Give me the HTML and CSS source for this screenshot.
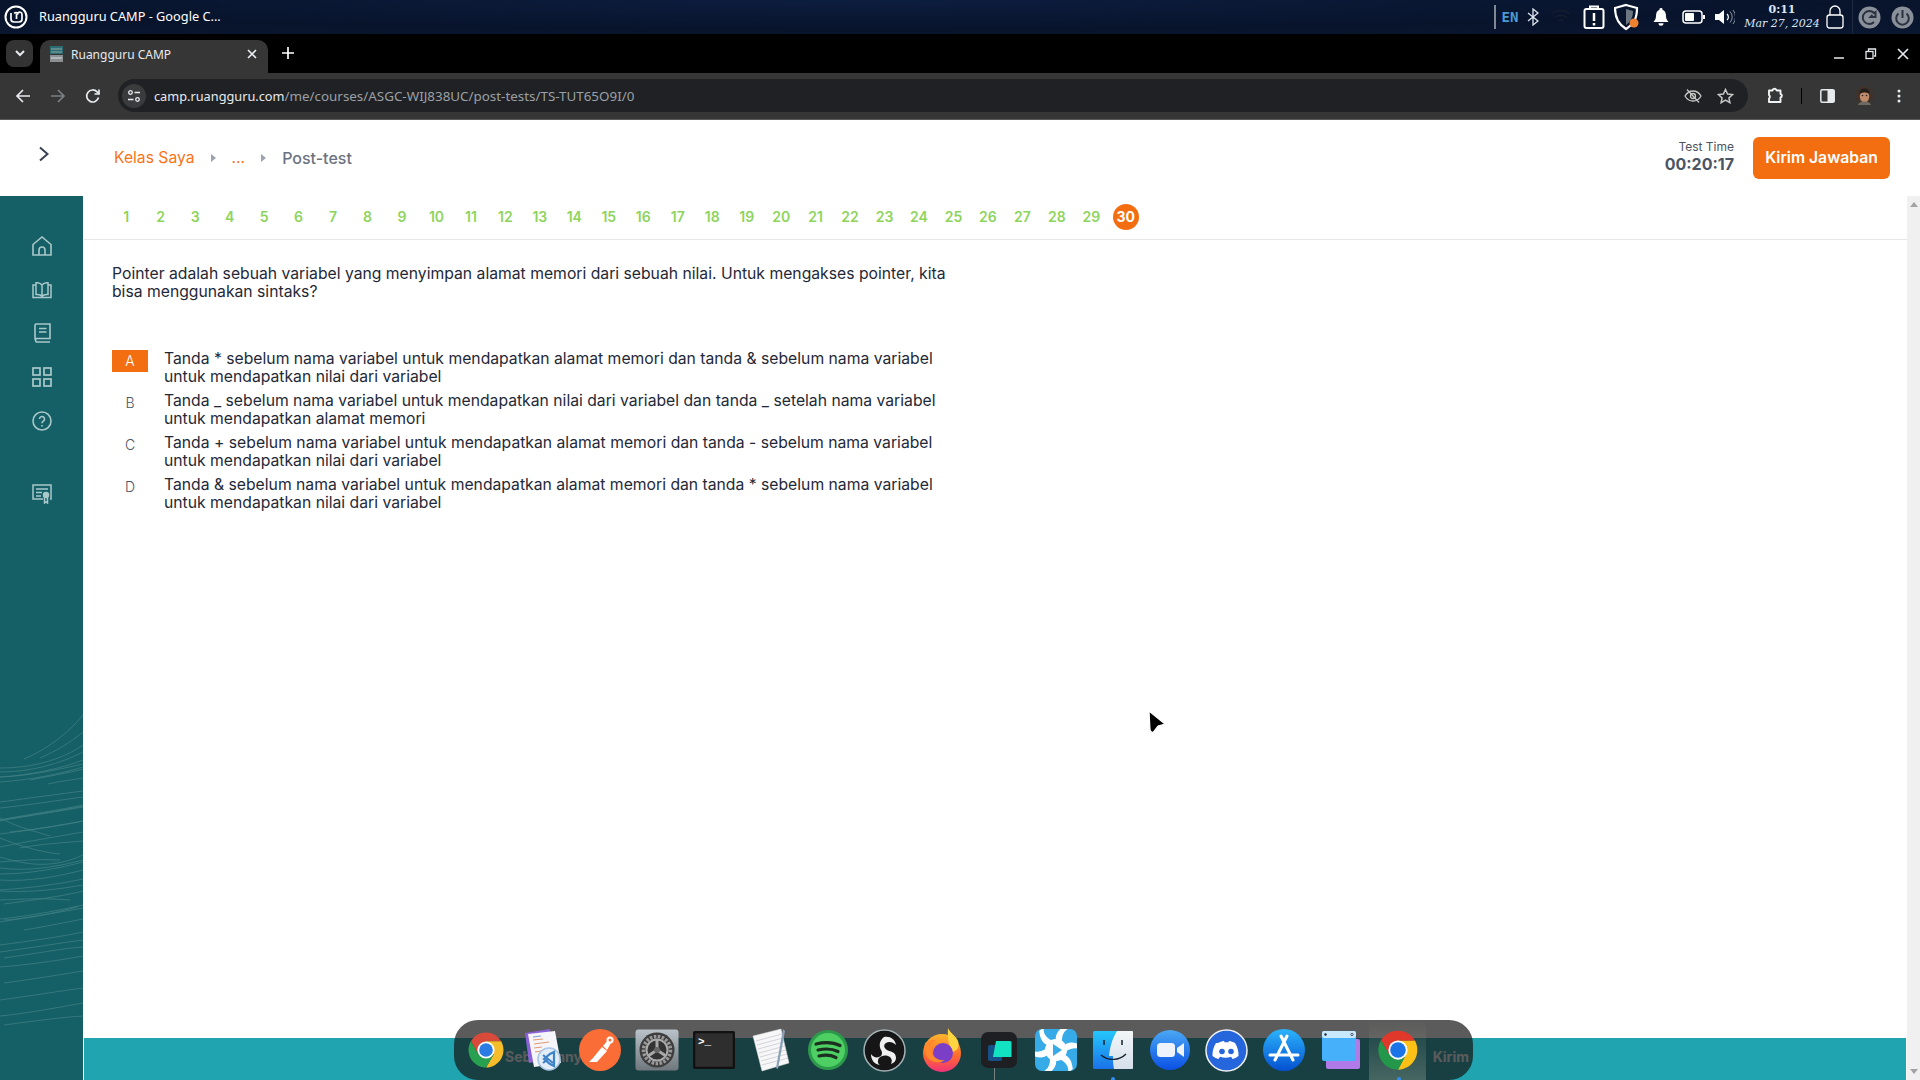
FILE: index.html
```html
<!DOCTYPE html>
<html lang="id">
<head>
<meta charset="utf-8">
<title>Ruangguru CAMP</title>
<link rel="stylesheet" href="styles.css">
</head>
<body>
<div class="screen">
  <div class="osbar">
    <div class="osleft">
      <svg class="mint" viewBox="0 0 24 24" fill="none" stroke="#fff" stroke-width="2"><circle cx="12" cy="12" r="10.500"/><path d="M7 8v6a3 3 0 0 0 3 3h5a3 3 0 0 0 3-3V9.500a2.200 2.200 0 0 0-4.200-1 2.200 2.200 0 0 0-3.600 0M12.500 9v5" stroke-width="1.700"/></svg>
      <span class="ostitle">Ruangguru CAMP - Google C...</span>
    </div>
    <div class="tray">
      <span class="cell w10"><i class="traysep"></i></span>
      <span class="cell w20 en">EN</span>
      <span class="cell w26"><svg width="12" height="18" viewBox="0 0 12 18" fill="none" stroke="#dfe5ee" stroke-width="1.300"><path d="M1 5l10 8-5 4V1l5 4L1 13"/></svg></span>
      <span class="cell w30"><svg width="20" height="16" viewBox="0 0 20 16" fill="none" stroke="#141e30" stroke-width="1.500"><path d="M1 5a13 13 0 0 1 18 0M4 8.500a9 9 0 0 1 12 0M7 12a4.500 4.500 0 0 1 6 0"/></svg></span>
      <span class="cell w36"><svg width="22" height="24" viewBox="0 0 22 24" fill="none" stroke="#fff" stroke-width="2"><rect x="1.500" y="4" width="19" height="19" rx="2"/><path d="M7 4V1.500h8V4"/><path d="M11 8v8M11 18v2.500" stroke-width="2.500"/></svg></span>
      <span class="cell w30"><svg width="26" height="28" viewBox="0 0 26 28"><path d="M12 2l11 3c0 9-2 15-11 21C4 21 1 14 1 5z" fill="none" stroke="#fff" stroke-width="2.200"/><path d="M12 6l7 2c0 6-2 10-7 14z" fill="#6d7783"/><circle cx="20" cy="20" r="4.500" fill="#ee8130"/></svg></span>
      <span class="cell w38"><svg width="16" height="18" viewBox="0 0 16 18" fill="#fff"><path d="M8 0a1.500 1.500 0 0 1 1.500 1.700C12 2.500 13 5 13 8c0 3 1.200 4.500 2.500 6H.5C1.800 12.500 3 11 3 8c0-3 1-5.500 3.500-6.300A1.500 1.500 0 0 1 8 0zM5.500 15.300h5a2.500 2.500 0 0 1-5 0z"/></svg></span>
      <span class="cell w28"><svg width="24" height="14" viewBox="0 0 24 14" fill="none" stroke="#fff" stroke-width="1.500"><rect x="1" y="1" width="19" height="12" rx="3"/><rect x="3" y="3" width="9" height="8" rx="1" fill="#fff" stroke="none"/><path d="M22 5v4" stroke-width="2"/></svg></span>
      <span class="cell w34"><svg width="20" height="16" viewBox="0 0 20 16" fill="none"><path d="M0 5h4l5-4v14l-5-4H0z" fill="#fff"/><path d="M12 5a4 4 0 0 1 0 6" stroke="#fff" stroke-width="1.200"/><path d="M15 2.500a8 8 0 0 1 0 11M18 1a11 11 0 0 1 0 14" stroke="#8994a4"/></svg></span>
      <span class="cell w80 clock"><b>0:11</b><em>Mar 27, 2024</em></span>
      <span class="cell w26"><svg width="18" height="24" viewBox="0 0 18 24" fill="none" stroke="#fff" stroke-width="1.300"><rect x="1" y="10" width="16" height="13" rx="2.500"/><path d="M4 10V6a5 5 0 0 1 10 0v4"/></svg></span>
      <span class="cell w8"><i class="traysep thin"></i></span>
      <span class="cell w26"><svg width="23" height="23" viewBox="0 0 23 23"><circle cx="11.500" cy="11.500" r="11" fill="#8a9099"/><path d="M16 16a6.500 6.500 0 1 1 0-9l1.500-1v5h-5l2-2" fill="none" stroke="#2a3240" stroke-width="2"/></svg></span>
      <span class="cell w26 shiftl"><svg width="23" height="23" viewBox="0 0 23 23"><circle cx="11.500" cy="11.500" r="11" fill="#8a9099"/><path d="M7.500 7.500a6.300 6.300 0 1 0 8 0M11.500 4v8" fill="none" stroke="#2a3240" stroke-width="2"/></svg></span>
    </div>
  </div>

  <div class="tabstrip">
    <span class="tabmenu"><svg width="10" height="7" viewBox="0 0 10 7" fill="none" stroke="#e8eaed" stroke-width="2"><path d="M1 1l4 4 4-4"/></svg></span>
    <div class="tab">
      <svg class="favicon" width="15" height="17" viewBox="0 0 15 17"><rect x="1" width="13" height="8" fill="#2c6c70"/><rect x="1" y="9" width="13" height="7" fill="#8a8f94"/><path d="M2 3h11M2 6h11" stroke="#8fa8a8"/><path d="M2 12h11" stroke="#ddd"/></svg>
      <span class="tabtitle">Ruangguru CAMP</span>
      <svg width="10" height="10" viewBox="0 0 10 10" stroke="#e8eaed" stroke-width="1.700"><path d="M1 1l8 8M9 1l-8 8"/></svg>
    </div>
    <svg class="newtab" width="12" height="12" viewBox="0 0 12 12" stroke="#fff" stroke-width="1.700"><path d="M6 0v12M0 6h12"/></svg>
    <div class="winctl">
      <span class="cell w32"><svg width="12" height="12" viewBox="0 0 12 12" stroke="#e8eaed" stroke-width="1.500"><path d="M1 10h10"/></svg></span>
      <span class="cell w32"><svg width="12" height="12" viewBox="0 0 12 12" fill="none" stroke="#e8eaed" stroke-width="1.300"><rect x="1" y="3.500" width="7" height="7"/><path d="M3.500 3V1h7v7H9"/></svg></span>
      <span class="cell w32"><svg width="12" height="12" viewBox="0 0 12 12" stroke="#e8eaed" stroke-width="1.600"><path d="M1 1l10 10M11 1L1 11"/></svg></span>
    </div>
  </div>

  <div class="toolbar">
    <span class="cell w35"><svg width="16" height="16" viewBox="0 0 16 16" fill="none" stroke="#e8eaed" stroke-width="1.700"><path d="M15 8H2M8 2L2 8l6 6"/></svg></span>
    <span class="cell w35"><svg width="16" height="16" viewBox="0 0 16 16" fill="none" stroke="#7c7f83" stroke-width="1.700"><path d="M1 8h13M8 2l6 6-6 6"/></svg></span>
    <span class="cell w35"><svg width="16" height="16" viewBox="0 0 16 16" fill="none" stroke="#e8eaed" stroke-width="1.700"><path d="M13.500 9.500a6 6 0 1 1-1.400-5.600L14 6"/><path d="M14 1.500V6H9.500"/></svg></span>
    <div class="omnibox">
      <span class="siteicon"><svg width="14" height="14" viewBox="0 0 14 14" fill="none" stroke="#e8eaed" stroke-width="1.300"><circle cx="3.500" cy="3.500" r="1.800"/><path d="M7.500 3.500H13M1 10.500h5.500"/><circle cx="10.500" cy="10.500" r="1.800"/></svg></span>
      <span class="url">camp.ruangguru.com<span class="urlpath">/me/courses/ASGC-WIJ838UC/post-tests/TS-TUT65O9I/0</span></span>
      <span class="cell w32"><svg width="18" height="16" viewBox="0 0 18 16" fill="none" stroke="#c4c7c5" stroke-width="1.300"><path d="M1 8c2-3.500 4.800-5 8-5s6 1.500 8 5c-2 3.500-4.800 5-8 5s-6-1.500-8-5z"/><circle cx="9" cy="8" r="2.500"/><path d="M3 1.500l12 13"/></svg></span>
      <span class="cell w32"><svg width="17" height="16" viewBox="0 0 17 16" fill="none" stroke="#c4c7c5" stroke-width="1.500"><path d="M8.500 1.500l2.100 4.500 4.900.6-3.600 3.300 1 4.800-4.400-2.500-4.400 2.500 1-4.800L1.500 6.600l4.900-.6z"/></svg></span>
    </div>
    <span class="cell w26"><svg width="18" height="17" viewBox="0 0 18 17" fill="none" stroke="#f2f3f4" stroke-width="1.900"><path d="M3 3.500h3.500a2 2 0 0 1 3.500-1l1 1h3.500V7a1.800 1.800 0 0 1 0 3.500V15H3v-3.500a2.200 2.200 0 0 0 0-3.500z" stroke-linejoin="round"/></svg></span>
    <span class="cell w26"><i class="tooldiv"></i></span>
    <span class="cell w26"><svg width="15" height="14" viewBox="0 0 15 14"><rect x=".8" y=".8" width="13.400" height="12.400" rx="1.500" fill="none" stroke="#e8eaed" stroke-width="1.500"/><rect x="7.500" y="1" width="7" height="12" fill="#e8eaed"/></svg></span>
    <span class="cell w48"><svg width="19" height="19" viewBox="0 0 19 19"><circle cx="9.500" cy="9.500" r="9.500" fill="#3c332c"/><ellipse cx="9.500" cy="10.500" rx="4.700" ry="6" fill="#c08a68"/><path d="M4.500 8c0-4 2-5.500 5-5.500s5 1.500 5 5.500c-3-2-7-2-10 0z" fill="#241d18"/><circle cx="7.500" cy="9.500" r=".8" fill="#222"/><circle cx="11.500" cy="9.500" r=".8" fill="#222"/><path d="M3 19c1-3 4-3.500 6.500-3.500S15 16 16 19z" fill="#6f6a60"/></svg></span>
    <span class="cell w22"><svg width="4" height="14" viewBox="0 0 4 14" fill="#e8eaed"><circle cx="2" cy="2" r="1.500"/><circle cx="2" cy="7" r="1.500"/><circle cx="2" cy="12" r="1.500"/></svg></span>
  </div>

  <header class="pagehead">
    <svg class="chev" width="12" height="16" viewBox="0 0 12 16" fill="none" stroke="#374151" stroke-width="2"><path d="M2 1.500L9.500 8 2 14.500"/></svg>
    <nav class="crumbs">
      <a>Kelas Saya</a><i class="tri"></i><a class="dots">...</a><i class="tri"></i><span class="cur">Post-test</span>
    </nav>
    <div class="timer"><span>Test Time</span><b>00:20:17</b></div>
    <button class="send">Kirim Jawaban</button>
  </header>

  <div class="body">
    <aside class="side">
      <svg class="sidelines" width="83" height="884" viewBox="0 0 83 884" fill="none" stroke="#4d8a8d" stroke-width=".8" opacity=".75">
        <path d="M24 563c24-10 44-26 59-44M40 562c16-7 30-15 43-26M0 572c30 0 60-7 83-23M0 576c30 0 60-8 83-20M0 581c30-2 60-8 83-17M0 586c30-2 60-8 83-15M0 581c30-1 60-8 83-13M30 584c20-4 38-7 53-11M48 588c12-3 24-4 35-6"/>
        <path d="M0 606c30-4 60-8 83-11M0 612c30-3 60-8 83-11M0 624c30-4 60-9 83-13M0 624c30-6 60-10 83-15M0 625c30-6 60-10 83-15M0 638c30-4 60-8 83-13M0 651c30-6 60-11 83-15M0 622c15 8 30 12 50 18M10 636c24-2 50-7 73-11"/>
        <path d="M0 642c20 8 40 14 60 16M20 652c20-4 40-5 63-7M0 661c24 7 50 13 83-2M0 666c20-2 40-3 60-2M0 672c30 4 60-2 83-8M0 678c30 0 60-6 83-12M0 684c30 2 60-4 83-10M0 694c30-2 60-6 83-11M0 695c30 2 60-2 83-6M0 704c24-1 46-2 70 0"/>
        <path d="M4 708c30-4 60-8 79-13M0 723c30-3 60-9 83-14M4 724c24-1 50-7 73-13M0 726c24-4 50-8 83-14M24 734c24-4 44-8 59-11M0 749c30-4 60-8 83-13M0 756c30-4 60-9 83-12M4 762c30-4 60-10 79-11M0 771c24-2 50-5 83-11M4 787c30-4 60-9 79-12M0 804c30-4 60-9 83-12M0 820c30-3 60-9 83-13M4 829c30-4 60-8 79-9"/>
      </svg>
      <nav class="sidenav">
        <svg viewBox="0 0 20 20" fill="none" stroke="#a9c8ca" stroke-width="1.600"><path d="M1 19V8.500L10 1l9 7.500V19zM7 19v-5a3 3 0 0 1 6 0v5"/></svg>
        <svg viewBox="0 0 20 20" fill="none" stroke="#a9c8ca" stroke-width="1.500"><path d="M10 5C8.500 3 6 2.500 4 2.800v11.700c2-.3 4.500 0 6 1.800 1.500-1.800 4-2.100 6-1.800V2.800C14 2.500 11.500 3 10 5zM10 5v11M4 5H1v12.500h18V5h-3"/></svg>
        <svg viewBox="0 0 20 20" fill="none" stroke="#a9c8ca" stroke-width="1.600"><path d="M3 16.500V2a1 1 0 0 1 1-1h14v14.500H4.500a2 2 0 0 0 0 3.500H18M7 5.500h7.500M7 9h7.500"/></svg>
        <svg viewBox="0 0 20 20" fill="none" stroke="#a9c8ca" stroke-width="1.700"><rect x="1" y="1" width="7" height="7"/><rect x="12" y="1" width="7" height="7"/><rect x="1" y="12" width="7" height="7"/><rect x="12" y="12" width="7" height="7"/></svg>
        <svg viewBox="0 0 20 20" fill="none" stroke="#a9c8ca" stroke-width="1.600"><circle cx="10" cy="10" r="9"/><path d="M7.500 8a2.500 2.500 0 1 1 3.800 2.100c-.9.600-1.300 1-1.300 2.200M10 14v1.600"/></svg>
        <svg class="cert" viewBox="0 0 20 20" fill="none" stroke="#a9c8ca" stroke-width="1.500"><path d="M11 15H1V1h18v14h-1M4 5h12M4 8.500h6M4 12h5"/><circle cx="14" cy="11" r="2.500" fill="#a9c8ca"/><path d="M12.500 13.500V19l1.500-1 1.500 1v-5.500"/></svg>
      </nav>
    </aside>

    <main class="main">
      <div class="numbers">
        <a>1</a><a>2</a><a>3</a><a>4</a><a>5</a><a>6</a><a>7</a><a>8</a><a>9</a><a>10</a><a>11</a><a>12</a><a>13</a><a>14</a><a>15</a><a>16</a><a>17</a><a>18</a><a>19</a><a>20</a><a>21</a><a>22</a><a>23</a><a>24</a><a>25</a><a>26</a><a>27</a><a>28</a><a>29</a><a class="active"><span>30</span></a>
      </div>
      <div class="content">
        <p class="question">Pointer adalah sebuah variabel yang menyimpan alamat memori dari sebuah nilai. Untuk mengakses pointer, kita bisa menggunakan sintaks?</p>
        <ul class="options">
          <li><span class="letter sel">A</span><span class="opt">Tanda * sebelum nama variabel untuk mendapatkan alamat memori dan tanda &amp; sebelum nama variabel untuk mendapatkan nilai dari variabel</span></li>
          <li><span class="letter">B</span><span class="opt">Tanda _ sebelum nama variabel untuk mendapatkan nilai dari variabel dan tanda _ setelah nama variabel untuk mendapatkan alamat memori</span></li>
          <li><span class="letter">C</span><span class="opt">Tanda + sebelum nama variabel untuk mendapatkan alamat memori dan tanda - sebelum nama variabel untuk mendapatkan nilai dari variabel</span></li>
          <li><span class="letter">D</span><span class="opt">Tanda &amp; sebelum nama variabel untuk mendapatkan alamat memori dan tanda * sebelum nama variabel untuk mendapatkan nilai dari variabel</span></li>
        </ul>
      </div>
      <div class="band"><span>Sebelumnya</span><span>Kirim</span></div>
    </main>

    <div class="scrollbar"><i class="up"></i><i class="down"></i></div>
  </div>

  <svg class="cursor" width="20" height="26" viewBox="0 0 20 26"><path d="M2 2l16 13-7 2-5 6.500q-3-.5-3-3z" fill="#000" stroke="#fff" stroke-width="1.200" stroke-linejoin="round"/></svg>

  <div class="dock">
    <span class="app"><svg width="42" height="42" viewBox="0 0 48 48"><path d="M24 14h17.300A20 20 0 0 0 6.700 14l8.600 15z" fill="#d94a3a"/><path d="M41.300 14A20 20 0 0 1 24 44l8.700-15L24 14z" fill="#f5bd2a"/><path d="M24 44A20 20 0 0 1 6.700 14l8.600 15h17.400z" fill="#27a04f"/><circle cx="24" cy="24" r="9.800" fill="#fff"/><circle cx="24" cy="24" r="7.800" fill="#2a7be4"/></svg></span>
    <span class="app"><svg width="42" height="46" viewBox="0 0 42 46"><path d="M3 6l25-4 3 30-24 4z" fill="#8a62d8"/><path d="M6 7l27-3 6 32-27 4z" fill="#f5f5fa"/><path d="M11 13l10-1M12 17l15-2M12 21l8-1M13 25l12-2" stroke="#e39a70" stroke-width="1"/><path d="M11 10l8-1" stroke="#7a9ad8" stroke-width="1"/><circle cx="27" cy="32" r="11" fill="#e3edf7" stroke="#a9c6e4" stroke-width="1.500"/><path d="M32 25v14l-4-2-6-5 6-5zM21 28l10 8M21 36l5-4" fill="none" stroke="#3d83c8" stroke-width="2.200"/></svg></span>
    <span class="app"><svg width="42" height="42" viewBox="0 0 42 42"><circle cx="21" cy="21" r="21" fill="#fb6d36"/><path d="M10 33l4-4 9-11 5 4-10 11z M10 33l13-1" fill="#fff"/><path d="M24 17l5-6 3 3-4 7z" fill="#fff"/><circle cx="31" cy="11" r="3.500" fill="#fff"/><circle cx="31" cy="11" r="1.500" fill="#fb6d36"/></svg></span>
    <span class="app"><svg width="44" height="42" viewBox="0 0 44 42"><defs><linearGradient id="sg" x1="0" y1="0" x2="0" y2="1"><stop offset="0" stop-color="#bac3c9"/><stop offset="1" stop-color="#6f777c"/></linearGradient></defs><rect width="43" height="41" x=".5" y=".5" rx="3" fill="url(#sg)"/><circle cx="22" cy="21" r="17.500" fill="#3d3d3d"/><circle cx="22" cy="21" r="13.500" fill="none" stroke="#9a9a9a" stroke-width="3.500" stroke-dasharray="2.500 1.500"/><circle cx="22" cy="21" r="10.500" fill="#333" stroke="#aaa" stroke-width="2"/><path d="M22 21V11M22 21l-9 6M22 21l9 6" stroke="#a8a8a8" stroke-width="3"/><circle cx="22" cy="21" r="3" fill="#666"/></svg></span>
    <span class="app"><svg width="42" height="38" viewBox="0 0 42 38"><rect x="1" y="1" width="40" height="36" rx="2" fill="#2e2e2e" stroke="#111" stroke-width="2.500"/><text x="5" y="14" fill="#fff" font-family="Liberation Mono, monospace" font-size="11" font-weight="700">&gt;_</text></svg></span>
    <span class="app"><svg width="38" height="44" viewBox="0 0 38 44"><path d="M1 8L29 1l8 34-27 8z" fill="#f7f7f7" stroke="#ddd" stroke-width=".5"/><path d="M4 13l26-7M5 17l26-7M6 21l26-7M7 25l26-7M8 29l26-7M9 33l26-7M10 37l26-7" stroke="#c9c9d6" stroke-width=".8"/><path d="M31 1l2 2-7 38-2-1z" fill="#8aa2b8"/></svg></span>
    <span class="app"><svg width="40" height="40" viewBox="0 0 40 40"><circle cx="20" cy="20" r="20" fill="#2c9a4a"/><circle cx="20" cy="20" r="17" fill="#4dcf63"/><path d="M8 14c8-2 17-2 24 1.500M10 20c7-1.500 14-1.500 20 1.500M11 26c6-1.300 12-1 17 1.500" fill="none" stroke="#1c2e20" stroke-width="3.200" stroke-linecap="round"/></svg></span>
    <span class="app"><svg width="43" height="43" viewBox="0 0 43 43"><circle cx="21.500" cy="21.500" r="20.500" fill="#161616" stroke="#a4b1b5" stroke-width="1.500"/><path d="M21 8c6-1 11 2 12 8-3-3-7-4-10-2-3 2-2 5 1 7 4 2 9 2 9 8 0 3-2 5-5 6 2-4 0-7-3-8-4-1-7 0-9 2-2 3-1 6 1 7-6-1-9-5-9-11 2 3 5 4 8 3 3-1 4-4 2-7-2-4-2-9 3-13z" fill="#f0f0f0"/></svg></span>
    <span class="app"><svg width="46" height="44" viewBox="0 0 46 44"><defs><linearGradient id="ff" x1="0" y1="0" x2="0" y2="1"><stop offset="0" stop-color="#ffb52e"/><stop offset=".55" stop-color="#ff6e2a"/><stop offset="1" stop-color="#f2327a"/></linearGradient></defs><circle cx="23" cy="25" r="19" fill="url(#ff)"/><path d="M29 0c2 5 8 8 10 13 2 6-1 10-6 11-2-6-5-11-4-24z" fill="#ffd642"/><circle cx="24" cy="25" r="10" fill="#7a3fc6"/><path d="M6 15c4-3 7-4 11-3-3 2-6 7-4 13 2 5 7 8 13 7-5 4-15 3-19-5-1-4-2-8-1-12z" fill="#ff8a2e"/></svg></span>
    <span class="app"><svg width="36" height="36" viewBox="0 0 36 36"><rect width="36" height="36" rx="7" fill="#1d1f22"/><rect x="7" y="13" width="14" height="16" rx="2" fill="#165087"/><path d="M15 9h14a1.500 1.500 0 0 1 1.500 1.500V25H12z" fill="#12e2c2"/></svg></span>
    <span class="app"><svg width="42" height="42" viewBox="0 0 42 42"><defs><clipPath id="kz"><rect width="42" height="42" rx="7"/></clipPath><path id="blade" d="M21 11c-1-4 1-9 8-14l6 2c-6 2-8 7-8 13z"/></defs><g clip-path="url(#kz)"><rect width="42" height="42" fill="#37abe8"/><g fill="#fff"><use href="#blade"/><use href="#blade" transform="rotate(60 21 21)"/><use href="#blade" transform="rotate(120 21 21)"/><use href="#blade" transform="rotate(180 21 21)"/><use href="#blade" transform="rotate(240 21 21)"/><use href="#blade" transform="rotate(300 21 21)"/></g><circle cx="21" cy="21" r="11" fill="#fff"/><path d="M18 15l9 6-9 6z" fill="#37abe8"/></g></svg></span>
    <span class="app"><svg width="40" height="38" viewBox="0 0 40 38"><defs><linearGradient id="fb" x1="0" y1="0" x2="0" y2="1"><stop offset="0" stop-color="#25c6fb"/><stop offset="1" stop-color="#1a72e8"/></linearGradient><linearGradient id="fw" x1="0" y1="0" x2="0" y2="1"><stop offset="0" stop-color="#f2f6f9"/><stop offset="1" stop-color="#d6e0ea"/></linearGradient></defs><rect width="40" height="38" rx="1.500" fill="url(#fb)"/><path d="M24 0h15a1 1 0 0 1 1 1v36a1 1 0 0 1-1 1H21c-1-6-1-9-1-13h-4c1-9 3-17 8-25z" fill="url(#fw)"/><path d="M11 9v5M29 9v5" stroke="#14202c" stroke-width="1.500"/><path d="M8 24c7 6 18 6 25-1" fill="none" stroke="#14202c" stroke-width="1.400"/></svg></span>
    <span class="app"><svg width="40" height="40" viewBox="0 0 40 40"><defs><linearGradient id="zb" x1="0" y1="0" x2="0" y2="1"><stop offset="0" stop-color="#4aa8f4"/><stop offset="1" stop-color="#0b50e4"/></linearGradient></defs><circle cx="20" cy="20" r="20" fill="url(#zb)"/><rect x="7" y="13" width="18" height="14" rx="3.500" fill="#edf2fb"/><path d="M27 18l7-5v14l-7-5z" fill="#edf2fb"/></svg></span>
    <span class="app"><svg width="43" height="43" viewBox="0 0 43 43"><circle cx="21.500" cy="21.500" r="20.500" fill="#2566dc" stroke="#f2f2f2" stroke-width="1.500"/><path d="M13 14c3-1.500 5-2 6-2l.6 1.300c1.300-.2 2.600-.2 3.800 0l.6-1.300c1 0 3 .5 6 2 2.500 4 3.700 8 3.500 13-2 1.600-4 2.500-6 3l-1.400-2.300c-3.600 1.400-7.700 1.400-11 0L13.500 30c-2-.5-4-1.400-6-3-.2-5 1-9 3.500-13z" fill="#fff"/><circle cx="17" cy="22.500" r="2.800" fill="#2566dc"/><circle cx="26" cy="22.500" r="2.800" fill="#2566dc"/></svg></span>
    <span class="app"><svg width="42" height="42" viewBox="0 0 42 42"><defs><linearGradient id="ab" x1="0" y1="0" x2="0" y2="1"><stop offset="0" stop-color="#2bb4fc"/><stop offset="1" stop-color="#0550d0"/></linearGradient></defs><circle cx="21" cy="21" r="21" fill="url(#ab)"/><g stroke="#fff" stroke-width="3" stroke-linecap="round" fill="none"><path d="M24 7L12 31M18 7l12 24M7 26h28"/></g></svg></span>
    <span class="app"><svg width="40" height="40" viewBox="0 0 40 40"><rect x="5" y="9" width="34" height="30" rx="2" fill="#b07be8"/><rect x="1" y="1" width="34" height="30" rx="2" fill="#47b0fb"/><rect x="1" y="1" width="34" height="7" rx="2" fill="#c8e8fb"/><circle cx="4.500" cy="4.500" r="1.200" fill="#223"/><circle cx="31" cy="4.500" r="1.200" fill="none" stroke="#556"/></svg></span>
    <span class="app last"><svg width="44" height="44" viewBox="0 0 48 48"><path d="M24 14h18.600A21.500 21.500 0 0 0 5.400 13.300l9 15.700z" fill="#e0392b"/><path d="M42.600 14A21.500 21.500 0 0 1 24 45.500l8.700-16.500L24 14z" fill="#fbc116"/><path d="M24 45.500A21.500 21.500 0 0 1 5.400 13.300l9 15.700h18.300z" fill="#23974a"/><circle cx="24" cy="24" r="10.500" fill="#fff"/><circle cx="24" cy="24" r="8.500" fill="#1b73e8"/></svg></span>
    <i class="dot dotfinder"></i><i class="dot dotchrome"></i><i class="stem"></i>
  </div>
</div>
</body>
</html>
```
FILE: styles.css
```css
* { box-sizing: border-box; }
html, body { margin: 0; padding: 0; }
body { font-family: Inter, "Liberation Sans", sans-serif; background: #fff; }
.screen { position: relative; width: 1920px; height: 1080px; overflow: hidden; display: flex; flex-direction: column; }
.cell { display: flex; align-items: center; justify-content: center; flex: none; }
.w8 { width: 8px; } .w10 { width: 10px; } .w20 { width: 20px; } .w22 { width: 22px; }
.w26 { width: 26px; } .w28 { width: 28px; } .w30 { width: 30px; } .w32 { width: 32px; }
.w34 { width: 34px; } .w35 { width: 35px; } .w36 { width: 36px; } .w38 { width: 38px; }
.w48 { width: 48px; } .w80 { width: 80px; }

/* OS bar */
.osbar { height: 34px; flex: none; display: flex; justify-content: space-between; align-items: center; padding: 0 5px 0 4px; background: radial-gradient(ellipse at 45% 0, #0d1d3f 0, #08142c 60%, #0a1730 100%); }
.osleft { display: flex; align-items: center; }
.mint { width: 24px; height: 24px; }
.ostitle { margin: 0 0 3px 11px; color: #fff; font: 12.750px "Noto Sans", sans-serif; }
.tray { display: flex; align-items: center; height: 34px; }
.traysep { display: block; width: 2px; height: 24px; background: #7f8894; }
.traysep.thin { width: 1px; height: 34px; background: #1e2a40; }
.en { color: #4a9ad6; font: 700 14px "DejaVu Sans Mono", monospace; }
.clock { flex-direction: column; color: #dbe8f7; line-height: 14px; font-family: "DejaVu Serif", serif; }
.clock b { font-size: 11px; }
.clock em { font-size: 11px; white-space: nowrap; }
.shiftl { margin-left: 7px; }

/* Tab strip */
.tabstrip { height: 39px; flex: none; background: #000; display: flex; align-items: flex-end; padding-left: 6px; }
.tabmenu { width: 27px; height: 27px; margin-bottom: 6px; border-radius: 8px; background: #333; display: flex; align-items: center; justify-content: center; }
.tab { width: 228px; height: 33px; margin-left: 7px; background: #363636; border-radius: 10px 10px 0 0; display: flex; align-items: center; padding: 0 11px 5px 9px; color: #e8eaed; }
.favicon { flex: none; }
.tabtitle { margin-left: 7px; flex: 1; font: 12px "Noto Sans", sans-serif; }
.newtab { margin: 0 0 14px 14px; }
.winctl { margin-left: auto; margin-right: 1px; display: flex; height: 39px; align-items: center; }

/* Toolbar */
.toolbar { height: 47px; flex: none; background: #363636; border-bottom: 1px solid #5a5a5a; display: flex; align-items: center; padding: 0 10px 1px 5px; }
.omnibox { flex: 1; height: 33px; margin: 0 14px 0 8px; background: #202124; border-radius: 17px; display: flex; align-items: center; padding: 0 7px 0 4px; }
.siteicon { width: 24px; height: 24px; border-radius: 50%; background: #3a3b3d; display: flex; align-items: center; justify-content: center; flex: none; }
.url { flex: 1; margin-left: 8px; color: #e8eaed; font: 12.750px "Noto Sans", sans-serif; }
.urlpath { color: #9aa0a6; font-size: 13.400px; }
.tooldiv { display: block; width: 1px; height: 16px; background: #000; }

/* Page header */
.pagehead { height: 76px; flex: none; background: #fff; display: flex; align-items: center; padding: 0 30px 0 38px; }
.chev { flex: none; margin-bottom: 8px; }
.crumbs { display: flex; align-items: center; margin: 0 0 1px 64px; font-size: 15.700px; line-height: 24px; }
.crumbs a { color: #f97316; }
.crumbs .tri { width: 0; height: 0; margin: 0 16px; border-left: 5px solid #9ca3af; border-top: 4px solid transparent; border-bottom: 4px solid transparent; }
.crumbs .cur { color: #6b7280; font-size: 16px; font-weight: 500; }
.timer { margin: 0 0 2px auto; display: flex; flex-direction: column; align-items: flex-end; color: #4b5563; }
.timer span { font-size: 12px; line-height: 14px; }
.timer b { font-size: 16px; line-height: 20px; font-weight: 700; }
.send { margin-left: 19px; width: 137px; height: 42px; border: 0; border-radius: 6px; background: #f36e10; color: #fff; font: 600 15.700px Inter, sans-serif; padding: 0 0 2px; }

/* Body */
.body { flex: 1; display: flex; min-height: 0; }
.side { width: 83px; flex: none; background: #155f66; position: relative; }
.sidelines { position: absolute; left: 0; top: 0; }
.sidenav { display: flex; flex-direction: column; align-items: center; padding-top: 40px; gap: 23.700px; position: relative; }
.sidenav svg { width: 20px; height: 20px; }
.sidenav .cert { margin-top: 30px; }
.main { flex: 1; display: flex; flex-direction: column; margin-left: 1px; min-width: 0; }
.numbers { height: 44px; flex: none; border-bottom: 1px solid #e5e7eb; display: flex; align-items: center; padding: 0 0 1px 25px; }
.numbers a { width: 34.480px; flex: none; text-align: center; color: #8ed45c; font-size: 14px; font-weight: 600; line-height: 26px; }
.numbers .active span { display: block; width: 26px; height: 26px; margin: 0 auto; border-radius: 50%; background: #f36e10; color: #fff; font-weight: 700; }
.content { flex: 1; padding: 25px 28px 0; color: #1f2937; font-size: 15.720px; line-height: 18px; }
.question { margin: 0; width: 850px; color: #1f2937; }
.options { list-style: none; margin: 49px 0 0; padding: 0; display: flex; flex-direction: column; gap: 6px; }
.options li { display: flex; width: 840px; }
.letter { width: 36px; height: 22px; flex: none; text-align: center; color: #4b5563; font-size: 14px; font-weight: 300; line-height: 22px; margin-right: 16px; }
.letter.sel { background: #f36e10; color: #fff; }
.opt { width: 790px; }
.band { height: 42px; flex: none; margin-right: 1px; background: #20a4af; display: flex; justify-content: space-between; align-items: center; padding: 0 437px 6px 421px; color: #fff; font-size: 14px; font-weight: 700; }
.scrollbar { width: 13px; flex: none; background: #f0f0f0; display: flex; flex-direction: column; justify-content: space-between; align-items: center; padding: 6px 0; }
.scrollbar i { width: 0; height: 0; border-left: 4px solid transparent; border-right: 4px solid transparent; }
.scrollbar .up { border-bottom: 5px solid #a3a3a3; }
.scrollbar .down { border-top: 5px solid #a3a3a3; }

/* Overlays */
.cursor { position: absolute; left: 1147px; top: 709px; }
.dock { position: absolute; left: 454px; top: 1020px; width: 1019px; height: 60px; border-radius: 24px; background: rgba(22, 22, 22, .7); display: flex; align-items: center; padding: 0 46px 0 3px; }
.app { width: 57px; flex: none; height: 60px; display: flex; align-items: center; justify-content: center; }
.app.last { background: linear-gradient(to bottom, rgba(255,255,255,0), rgba(255,255,220,.2)); }
.dot { position: absolute; bottom: 0; width: 4px; height: 3px; border-radius: 2px 2px 0 0; background: #2f8cf0; }
.dotfinder { left: 657px; }
.dotchrome { left: 943px; }
.stem { position: absolute; left: 540px; bottom: 0; width: 1px; height: 12px; background: #7a7f80; }
```
